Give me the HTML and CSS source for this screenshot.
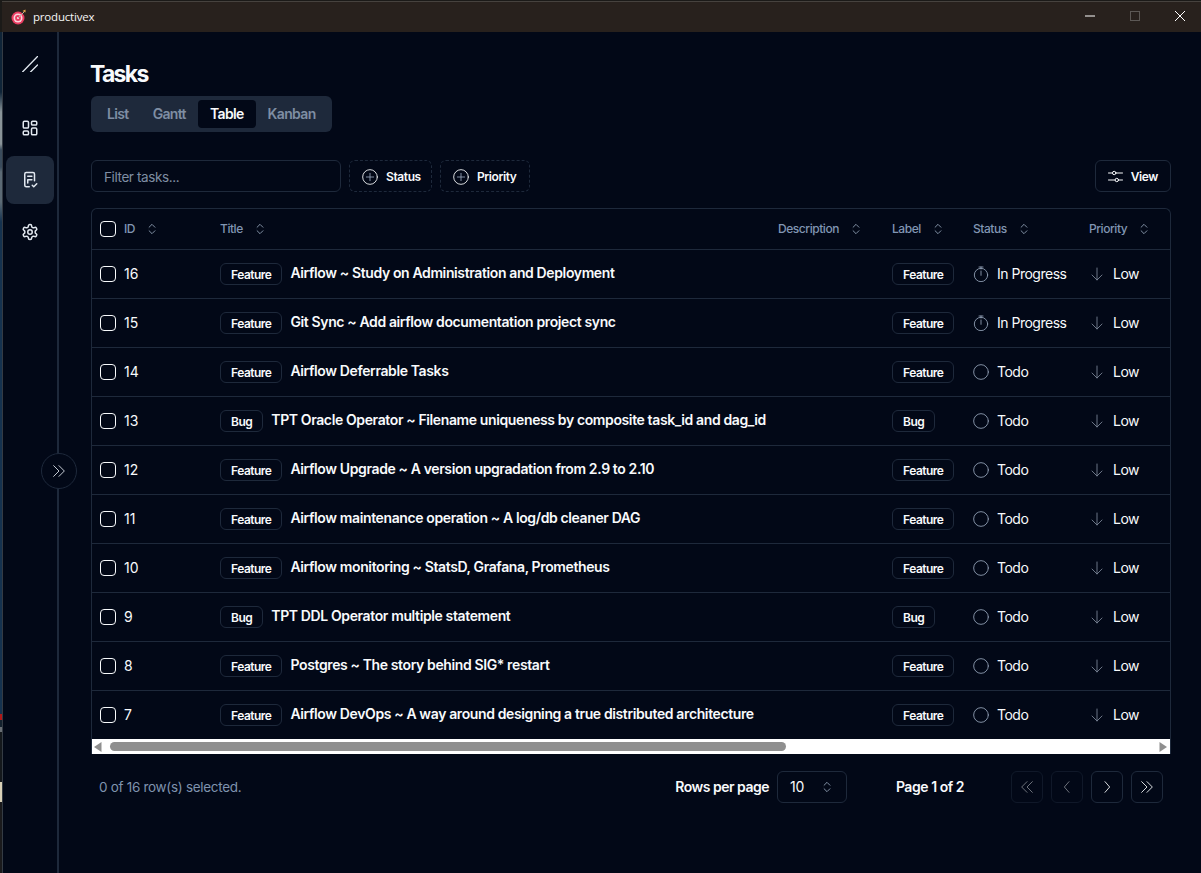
FILE: index.html
```html
<!DOCTYPE html>
<html lang="en">
<head>
<meta charset="utf-8">
<title>productivex</title>
<link rel="stylesheet" href="styles.css">
</head>
<body>
<svg class="sprite" width="0" height="0" aria-hidden="true">
  <symbol id="i-sort" viewBox="0 0 24 24"><path d="m7 15 5 5 5-5M7 9l5-5 5 5"/></symbol>
  <symbol id="i-timer" viewBox="0 0 24 24"><path d="M9 1.500h6M12 1.500v3M12 14V7.500"/><circle cx="12" cy="13.500" r="10"/></symbol>
  <symbol id="i-circle" viewBox="0 0 24 24"><circle cx="12" cy="12" r="11"/></symbol>
  <symbol id="i-down" viewBox="0 0 24 24"><path d="M12 3v18M19.500 13.500 12 21l-7.500-7.500"/></symbol>
  <symbol id="i-plus" viewBox="0 0 24 24"><circle cx="12" cy="12" r="11"/><path class="plus-mark" d="M12 6.500v11M6.500 12h11"/></symbol>
  <symbol id="i-dbl" viewBox="0 0 24 24"><path d="M4 20l8-8-8-8M12 20l8-8-8-8"/></symbol>
  <symbol id="i-dbl-left" viewBox="0 0 24 24"><path d="M12 20l-8-8 8-8M20 20l-8-8 8-8"/></symbol>
</svg>

<header class="titlebar">
  <svg class="logo" viewBox="0 0 16 16" width="16" height="16">
    <circle cx="7" cy="9" r="6.500" fill="#ea3d62"/>
    <circle cx="7" cy="9" r="4.500" fill="#fbd3db"/>
    <circle cx="7" cy="9" r="2.900" fill="#ea3d62"/>
    <circle cx="7" cy="9" r="1.100" fill="#fbe4e8"/>
    <path d="M7 9l6-6" stroke="#b9b2a6" stroke-width="1"/>
    <path d="M11.500 2l3-1.500v3z" fill="#e6ab4c"/>
  </svg>
  <span class="app-name">productivex</span>
  <div class="win-controls">
    <svg class="win-btn" viewBox="0 0 10 10" width="10" height="10"><path d="M0 5h10" stroke="#fff"/></svg>
    <svg class="win-btn" viewBox="0 0 10 10" width="10" height="10"><rect x=".5" y=".5" width="9" height="9" fill="none" stroke="#5c5855"/></svg>
    <svg class="win-btn" viewBox="0 0 10 10" width="10" height="10"><path d="M0 0l10 10M10 0L0 10" stroke="#fff"/></svg>
  </div>
</header>

<div class="window">
  <div class="desktop-strip"></div>
  <aside class="sidebar">
    <div class="side-item side-brand">
      <svg class="side-ico ico-brand" viewBox="0 0 16 16" width="16" height="16"><path d="M.5 16 15.500.5M8.500 16l7-7"/></svg>
    </div>
    <nav class="side-nav">
      <div class="side-item">
        <svg class="side-ico" viewBox="0 0 24 24" width="18" height="18"><rect x="3" y="3" width="7" height="9" rx="1.500"/><rect x="14" y="3" width="7" height="5" rx="1.500"/><rect x="14" y="12" width="7" height="9" rx="1.500"/><rect x="3" y="16" width="7" height="5" rx="1.500"/></svg>
      </div>
      <div class="side-item side-active">
        <svg class="side-ico" viewBox="0 0 24 24" width="18" height="18"><path d="M11 21H7a2 2 0 0 1-2-2V4a2 2 0 0 1 2-2h9a2 2 0 0 1 2 2v9"/><path d="M9 7h5.500M9 11.500h5.500M9 11.500V16"/><path d="m15 19 2 2 4-4"/></svg>
      </div>
      <div class="side-item">
        <svg class="side-ico" viewBox="0 0 24 24" width="18" height="18"><path d="M12.220 2h-.44a2 2 0 0 0-2 2v.18a2 2 0 0 1-1 1.730l-.43.25a2 2 0 0 1-2 0l-.15-.08a2 2 0 0 0-2.730.73l-.22.38a2 2 0 0 0 .73 2.730l.15.1a2 2 0 0 1 1 1.720v.51a2 2 0 0 1-1 1.740l-.15.09a2 2 0 0 0-.73 2.730l.22.38a2 2 0 0 0 2.730.73l.15-.08a2 2 0 0 1 2 0l.43.25a2 2 0 0 1 1 1.730V20a2 2 0 0 0 2 2h.44a2 2 0 0 0 2-2v-.18a2 2 0 0 1 1-1.730l.43-.25a2 2 0 0 1 2 0l.15.08a2 2 0 0 0 2.730-.73l.22-.39a2 2 0 0 0-.73-2.730l-.15-.08a2 2 0 0 1-1-1.740v-.5a2 2 0 0 1 1-1.740l.15-.09a2 2 0 0 0 .73-2.730l-.22-.38a2 2 0 0 0-2.730-.73l-.15.08a2 2 0 0 1-2 0l-.43-.25a2 2 0 0 1-1-1.730V4a2 2 0 0 0-2-2z"/><circle cx="12" cy="12" r="3"/></svg>
      </div>
    </nav>
    <button class="collapse" type="button" aria-label="Expand">
      <svg class="ico ico-page"><use href="#i-dbl"/></svg>
    </button>
  </aside>

  <main class="main">
    <h1 class="page-title">Tasks</h1>
    <div class="tabs">
      <span class="tab">List</span>
      <span class="tab">Gantt</span>
      <span class="tab tab-active">Table</span>
      <span class="tab">Kanban</span>
    </div>

    <div class="toolbar">
      <div class="filter-input">Filter tasks...</div>
      <button class="btn-dashed btn-status" type="button"><svg class="ico ico-plus"><use href="#i-plus"/></svg>Status</button>
      <button class="btn-dashed btn-priority" type="button"><svg class="ico ico-plus"><use href="#i-plus"/></svg>Priority</button>
      <button class="btn-view" type="button">
        <svg class="ico ico-view" viewBox="0 0 15 15"><path d="M0.500 4h4M8 4h6.500M0.500 11h6.500M10.500 11h4"/><circle cx="6.200" cy="4" r="1.700"/><circle cx="8.800" cy="11" r="1.700"/></svg>View
      </button>
    </div>

    <div class="table-wrap">
      <table class="tasks">
        <colgroup>
          <col class="c-id"><col class="c-title"><col class="c-desc"><col class="c-label"><col class="c-status"><col class="c-prio">
        </colgroup>
        <thead>
          <tr>
            <th><span class="cell-flex"><span class="check"></span><span class="th-id">ID</span><svg class="ico ico-sort"><use href="#i-sort"/></svg></span></th>
            <th>Title<svg class="ico ico-sort"><use href="#i-sort"/></svg></th>
            <th>Description<svg class="ico ico-sort"><use href="#i-sort"/></svg></th>
            <th>Label<svg class="ico ico-sort"><use href="#i-sort"/></svg></th>
            <th>Status<svg class="ico ico-sort"><use href="#i-sort"/></svg></th>
            <th>Priority<svg class="ico ico-sort"><use href="#i-sort"/></svg></th>
          </tr>
        </thead>
        <tbody>
          <tr>
            <td><span class="cell-flex"><span class="check"></span><span class="num">16</span></span></td>
            <td colspan="2"><span class="badge">Feature</span><span class="title">Airflow ~ Study on Administration and Deployment</span></td>
            <td><span class="badge">Feature</span></td>
            <td><span class="cell-flex"><svg class="ico ico-status"><use href="#i-timer"/></svg>In Progress</span></td>
            <td><span class="cell-flex"><svg class="ico ico-prio"><use href="#i-down"/></svg>Low</span></td>
          </tr>
          <tr>
            <td><span class="cell-flex"><span class="check"></span><span class="num">15</span></span></td>
            <td colspan="2"><span class="badge">Feature</span><span class="title">Git Sync ~ Add airflow documentation project sync</span></td>
            <td><span class="badge">Feature</span></td>
            <td><span class="cell-flex"><svg class="ico ico-status"><use href="#i-timer"/></svg>In Progress</span></td>
            <td><span class="cell-flex"><svg class="ico ico-prio"><use href="#i-down"/></svg>Low</span></td>
          </tr>
          <tr>
            <td><span class="cell-flex"><span class="check"></span><span class="num">14</span></span></td>
            <td colspan="2"><span class="badge">Feature</span><span class="title">Airflow Deferrable Tasks</span></td>
            <td><span class="badge">Feature</span></td>
            <td><span class="cell-flex"><svg class="ico ico-status"><use href="#i-circle"/></svg>Todo</span></td>
            <td><span class="cell-flex"><svg class="ico ico-prio"><use href="#i-down"/></svg>Low</span></td>
          </tr>
          <tr>
            <td><span class="cell-flex"><span class="check"></span><span class="num">13</span></span></td>
            <td colspan="2"><span class="badge">Bug</span><span class="title">TPT Oracle Operator ~ Filename uniqueness by composite task_id and dag_id</span></td>
            <td><span class="badge">Bug</span></td>
            <td><span class="cell-flex"><svg class="ico ico-status"><use href="#i-circle"/></svg>Todo</span></td>
            <td><span class="cell-flex"><svg class="ico ico-prio"><use href="#i-down"/></svg>Low</span></td>
          </tr>
          <tr>
            <td><span class="cell-flex"><span class="check"></span><span class="num">12</span></span></td>
            <td colspan="2"><span class="badge">Feature</span><span class="title">Airflow Upgrade ~ A version upgradation from 2.9 to 2.10</span></td>
            <td><span class="badge">Feature</span></td>
            <td><span class="cell-flex"><svg class="ico ico-status"><use href="#i-circle"/></svg>Todo</span></td>
            <td><span class="cell-flex"><svg class="ico ico-prio"><use href="#i-down"/></svg>Low</span></td>
          </tr>
          <tr>
            <td><span class="cell-flex"><span class="check"></span><span class="num">11</span></span></td>
            <td colspan="2"><span class="badge">Feature</span><span class="title">Airflow maintenance operation ~ A log/db cleaner DAG</span></td>
            <td><span class="badge">Feature</span></td>
            <td><span class="cell-flex"><svg class="ico ico-status"><use href="#i-circle"/></svg>Todo</span></td>
            <td><span class="cell-flex"><svg class="ico ico-prio"><use href="#i-down"/></svg>Low</span></td>
          </tr>
          <tr>
            <td><span class="cell-flex"><span class="check"></span><span class="num">10</span></span></td>
            <td colspan="2"><span class="badge">Feature</span><span class="title">Airflow monitoring ~ StatsD, Grafana, Prometheus</span></td>
            <td><span class="badge">Feature</span></td>
            <td><span class="cell-flex"><svg class="ico ico-status"><use href="#i-circle"/></svg>Todo</span></td>
            <td><span class="cell-flex"><svg class="ico ico-prio"><use href="#i-down"/></svg>Low</span></td>
          </tr>
          <tr>
            <td><span class="cell-flex"><span class="check"></span><span class="num">9</span></span></td>
            <td colspan="2"><span class="badge">Bug</span><span class="title">TPT DDL Operator multiple statement</span></td>
            <td><span class="badge">Bug</span></td>
            <td><span class="cell-flex"><svg class="ico ico-status"><use href="#i-circle"/></svg>Todo</span></td>
            <td><span class="cell-flex"><svg class="ico ico-prio"><use href="#i-down"/></svg>Low</span></td>
          </tr>
          <tr>
            <td><span class="cell-flex"><span class="check"></span><span class="num">8</span></span></td>
            <td colspan="2"><span class="badge">Feature</span><span class="title">Postgres ~ The story behind SIG* restart</span></td>
            <td><span class="badge">Feature</span></td>
            <td><span class="cell-flex"><svg class="ico ico-status"><use href="#i-circle"/></svg>Todo</span></td>
            <td><span class="cell-flex"><svg class="ico ico-prio"><use href="#i-down"/></svg>Low</span></td>
          </tr>
          <tr>
            <td><span class="cell-flex"><span class="check"></span><span class="num">7</span></span></td>
            <td colspan="2"><span class="badge">Feature</span><span class="title">Airflow DevOps ~ A way around designing a true distributed architecture</span></td>
            <td><span class="badge">Feature</span></td>
            <td><span class="cell-flex"><svg class="ico ico-status"><use href="#i-circle"/></svg>Todo</span></td>
            <td><span class="cell-flex"><svg class="ico ico-prio"><use href="#i-down"/></svg>Low</span></td>
          </tr>
        </tbody>
      </table>
      <div class="scrollbar">
        <svg class="sb-arrow" viewBox="0 0 8 10" width="8" height="10"><path d="M7.500 0v10L0 5z"/></svg>
        <div class="sb-track"><div class="sb-thumb"></div></div>
        <svg class="sb-arrow" viewBox="0 0 8 10" width="8" height="10"><path d="M.5 0v10L8 5z"/></svg>
      </div>
    </div>

    <div class="pager">
      <span class="selected">0 of 16 row(s) selected.</span>
      <span class="rows-label">Rows per page</span>
      <div class="rows-select">10<svg class="ico ico-sort ico-sort-sel"><use href="#i-sort"/></svg></div>
      <span class="page-info">Page 1 of 2</span>
      <div class="page-btns">
        <button class="page-btn is-off" type="button"><svg class="ico ico-page"><use href="#i-dbl-left"/></svg></button>
        <button class="page-btn is-off" type="button"><svg class="ico ico-page" viewBox="0 0 24 24"><path d="M15 20l-7-8 7-8"/></svg></button>
        <button class="page-btn" type="button"><svg class="ico ico-page" viewBox="0 0 24 24"><path d="M9 20l7-8-7-8"/></svg></button>
        <button class="page-btn" type="button"><svg class="ico ico-page"><use href="#i-dbl"/></svg></button>
      </div>
    </div>
  </main>
</div>
</body>
</html>
```
FILE: styles.css
```css
* { box-sizing: border-box; }

html, body {
  margin: 0;
  height: 100%;
  overflow: hidden;
}

body {
  display: flex;
  flex-direction: column;
  background: #020817;
  color: #f8fafc;
  font: 14px/20px Inter, "Liberation Sans", sans-serif;
  letter-spacing: -0.3px;
}

.sprite { display: block; }

button {
  font: inherit;
  letter-spacing: inherit;
  color: inherit;
  background: none;
  cursor: pointer;
}

/* title bar */
.titlebar {
  flex: 0 0 32px;
  display: flex;
  align-items: center;
  padding: 2px 0 0 9px;
  background: linear-gradient(#1b1a18 0 1px, #46423e 1px 2px, #28211d 2px);
  border-left: 2px solid #1b1a18;
}

.logo { margin-right: 6px; }

.app-name {
  font: 11.500px/16px "Open Sans", "Noto Sans", sans-serif;
  letter-spacing: -0.2px;
  color: #f5f5f5;
}

.win-controls {
  margin: -2px 0 0 auto;
  padding-right: 16px;
  display: flex;
  align-items: center;
}

.win-btn { margin-left: 35px; }

/* frame */
.window {
  flex: 1;
  min-height: 0;
  display: flex;
}

.desktop-strip {
  flex: 0 0 3px;
  border-right: 1px solid #343b44;
  background: linear-gradient(#0f2438 0 60px, #8a9499 80px 112px, #3a4b5c 118px 135px, #5c6a75 140px 170px, #15324f 190px 682px, #b01818 682px 688px, #14212e 688px 695px, #6a6f75 695px 700px, #14181c 700px 750px, #d8d0b8 750px 770px, #1a1a1c 770px);
}

.sidebar {
  position: relative;
  flex: 0 0 56px;
  border-right: 2px solid #1e293b;
  display: flex;
  flex-direction: column;
  align-items: center;
}

.side-item {
  width: 48px;
  height: 48px;
  display: flex;
  align-items: center;
  justify-content: center;
  border-radius: 8px;
}

.side-brand { margin-top: 8px; }

.side-nav {
  margin-top: 16px;
  display: flex;
  flex-direction: column;
  gap: 4px;
}

.side-active { background: #1e293b; }

.side-ico {
  fill: none;
  stroke: #e2e8f0;
  stroke-width: 2;
  stroke-linecap: round;
  stroke-linejoin: round;
}

.ico-brand { stroke-width: 1.300; }

.collapse {
  position: absolute;
  top: 421px;
  left: 38px;
  width: 36px;
  height: 36px;
  padding: 0;
  display: flex;
  align-items: center;
  justify-content: center;
  background: #020817;
  border: 1px solid #1e293b;
  border-radius: 50%;
  color: #e2e8f0;
}

/* main */
.main {
  flex: 1;
  min-width: 0;
  padding: 26px 30px 0 32px;
}

.page-title {
  margin: 0 0 0 -1px;
  font-size: 23px;
  line-height: 32px;
  font-weight: 700;
  letter-spacing: -1.700px;
}

.tabs {
  margin-top: 6px;
  display: inline-flex;
  height: 36px;
  padding: 4px;
  background: #1e293b;
  border-radius: 6px;
  vertical-align: top;
}

.tab {
  padding: 4px 12px;
  font-weight: 600;
  color: #7f8ea3;
  border-radius: 4px;
  letter-spacing: -0.65px;
}

.tab-active {
  background: #020817;
  color: #f8fafc;
}

/* toolbar */
.toolbar {
  margin-top: 28px;
  display: flex;
  gap: 8px;
  align-items: center;
}

.filter-input {
  width: 250px;
  height: 32px;
  padding: 6px 12px 4px;
  border: 1px solid #1e293b;
  border-radius: 6px;
  color: #7f8ea3;
  font-size: 13.500px;
  letter-spacing: -0.4px;
}

.btn-dashed, .btn-view {
  height: 32px;
  display: inline-flex;
  align-items: center;
  padding: 1px 0 0 12px;
  font-size: 12px;
  font-weight: 600;
  letter-spacing: -0.4px;
  border: 1px dashed #1e293b;
  border-radius: 6px;
}

.btn-status { width: 83px; }
.btn-priority { width: 90px; }

.btn-view {
  margin-left: auto;
  padding-right: 12px;
  border-style: solid;
}

.ico {
  fill: none;
  stroke: currentColor;
  stroke-width: 2;
  stroke-linecap: round;
  stroke-linejoin: round;
  flex: none;
}

.ico-plus { width: 16px; height: 16px; margin-right: 8px; stroke-width: 1.300; }
.plus-mark { stroke: #94a3b8; }
.ico-view { width: 15px; height: 15px; margin-right: 8px; stroke-width: 1; }

/* table */
.table-wrap {
  margin-top: 16px;
  border: 1px solid #1e293b;
  border-bottom: 0;
  border-radius: 6px 6px 0 0;
  overflow: hidden;
}

.tasks {
  width: 1078px;
  table-layout: fixed;
  border-collapse: collapse;
}

.c-id { width: 120px; }
.c-title { width: 558px; }
.c-desc { width: 114px; }
.c-label { width: 81px; }
.c-status { width: 116px; }
.c-prio { width: 89px; }

.tasks th {
  height: 40px;
  padding: 1px 8px 0;
  text-align: left;
  font-size: 12px;
  font-weight: 500;
  letter-spacing: -0.45px;
  color: #8196b3;
  border-bottom: 1px solid #1e293b;
}

.tasks td {
  height: 49px;
  padding: 0 8px;
  border-bottom: 1px solid #1e293b;
  white-space: nowrap;
  letter-spacing: -0.5px;
}

.tasks tbody tr:last-child td { border-bottom: 0; }

.cell-flex {
  display: flex;
  align-items: center;
}

.check {
  flex: none;
  width: 16px;
  height: 16px;
  border: 1px solid #f8fafc;
  border-radius: 4px;
}

.th-id { margin-left: 8px; }
.num { margin-left: 8px; letter-spacing: 0; }

.ico-sort {
  width: 14px;
  height: 14px;
  margin-left: 10px;
  vertical-align: -3px;
  stroke-width: 1.500;
  color: #94a3b8;
}

.badge {
  display: inline-block;
  padding: 1px 10px;
  height: 22px;
  font-size: 12px;
  line-height: 20px;
  font-weight: 600;
  letter-spacing: -0.5px;
  border: 1px solid #1e293b;
  border-radius: 6px;
  vertical-align: middle;
}

.title {
  margin-left: 8px;
  font-weight: 600;
  letter-spacing: -0.38px;
  vertical-align: middle;
  position: relative;
  top: -1px;
}

.ico-status {
  width: 16px;
  height: 16px;
  margin-right: 8px;
  stroke-width: 1.300;
  color: #94a3b8;
}

.ico-prio {
  width: 16px;
  height: 16px;
  margin-right: 8px;
  stroke-width: 1.300;
  color: #7c8798;
}

.scrollbar {
  height: 15px;
  display: flex;
  align-items: center;
  gap: 8px;
  padding: 0 3px 0 2px;
  background: #fff;
}

.sb-arrow { fill: #8f8f8f; flex: none; }

.sb-track {
  flex: 1;
  height: 9px;
}

.sb-thumb {
  width: 676px;
  height: 9px;
  background: #8f8f8f;
  border-radius: 5px;
}

/* pager */
.pager {
  margin-top: 17px;
  height: 32px;
  padding: 0 8px;
  display: flex;
  align-items: center;
}

.selected {
  font-size: 13.500px;
  color: #7f93ae;
}

.rows-label {
  margin-left: auto;
  font-weight: 600;
  letter-spacing: -0.5px;
}

.rows-select {
  margin-left: 8px;
  width: 70px;
  height: 32px;
  padding: 0 12px;
  display: flex;
  align-items: center;
  justify-content: space-between;
  border: 1px solid #1e293b;
  border-radius: 6px;
}

.ico-sort-sel { margin: 0; }

.page-info {
  width: 100px;
  margin-left: 33px;
  text-align: center;
  font-weight: 600;
  letter-spacing: -0.45px;
}

.page-btns {
  margin-left: 31px;
  display: flex;
  gap: 8px;
}

.page-btn {
  width: 32px;
  height: 32px;
  padding: 0;
  display: flex;
  align-items: center;
  justify-content: center;
  border: 1px solid #1e293b;
  border-radius: 6px;
}

.ico-page { width: 16px; height: 16px; stroke-width: 1.300; }

.is-off { opacity: .5; }
```
